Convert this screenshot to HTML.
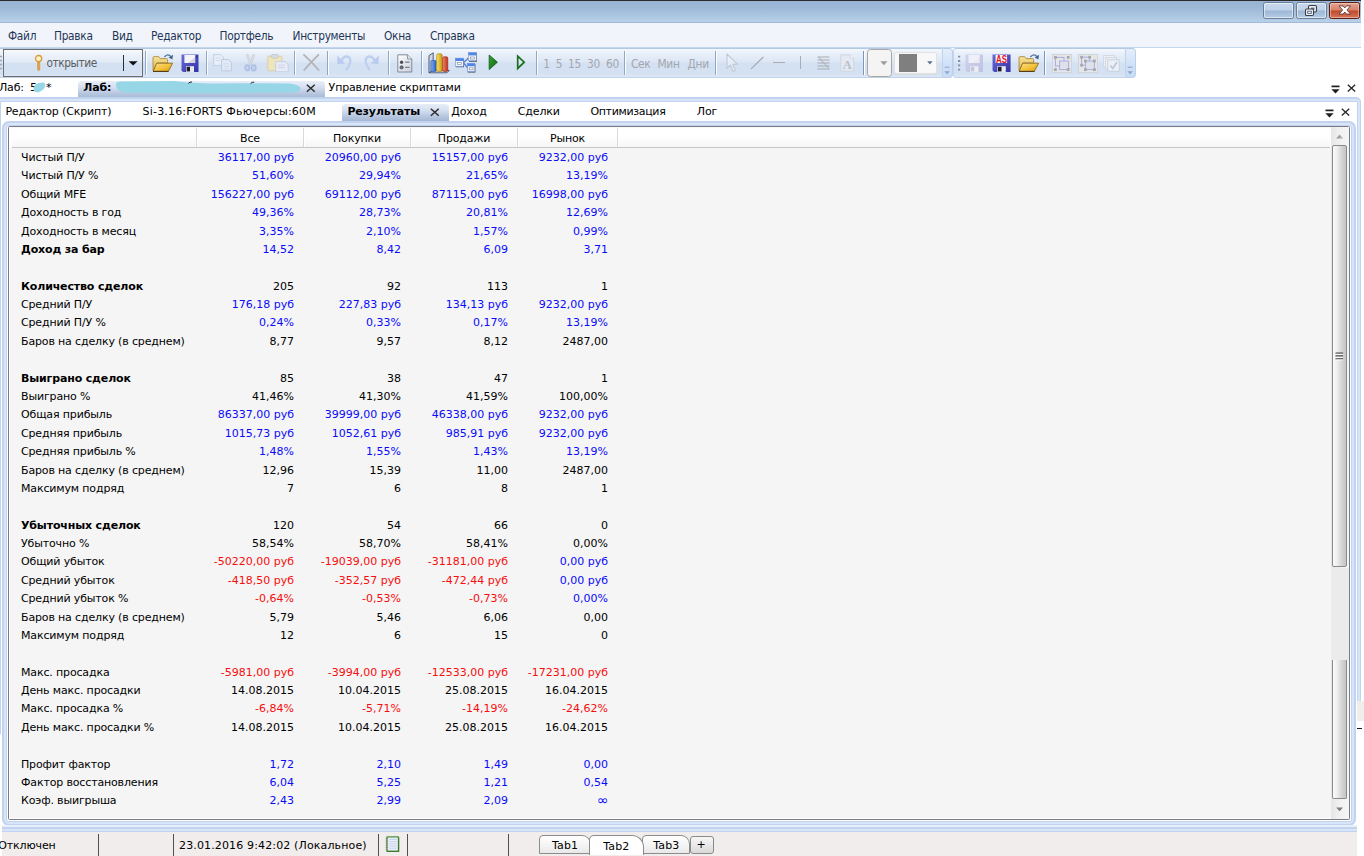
<!DOCTYPE html>
<html lang="ru"><head><meta charset="utf-8"><title>Результаты</title>
<style>
html,body{margin:0;padding:0}
body{width:1364px;height:856px;position:relative;overflow:hidden;background:#fff;font-family:"DejaVu Sans","Liberation Sans",sans-serif;font-size:11px;color:#000;line-height:13px}
div,span,svg{position:absolute;box-sizing:border-box}
.ui{font-family:"DejaVu Sans Condensed","Liberation Sans",sans-serif;font-size:11.8px;line-height:14px;white-space:pre;letter-spacing:-.3px}
.t{white-space:pre;letter-spacing:-0.15px}
/* title */
#title{left:0;top:0;width:1361px;height:23px;background:linear-gradient(#97b2d2 0,#9db8d7 30%,#aac4e0 65%,#b8d0e9 100%);border-top:1px solid #2a2a2a;border-bottom:1px solid #a3bad6}
.wb{top:2px;height:17px;border:1px solid #6d7f95;border-radius:2.5px;background:linear-gradient(#c6d8ec 0,#c0d3e9 48%,#9db7d4 52%,#b4cce6 100%);box-shadow:inset 0 0 0 1px rgba(255,255,255,.55)}
#wclose{background:linear-gradient(#e3a493 0,#d78069 48%,#c1482a 52%,#d4775b 100%);border-color:#5b1d16;box-shadow:inset 0 0 0 1px rgba(255,220,210,.5)}
/* menu */
#menu{left:0;top:23px;width:1361px;height:25px;background:#f1f5fb;border-bottom:1px solid #c3d6ec}
#menu span{top:6px;color:#1f3558}
/* toolbar */
.tb{top:48px;height:30px;background:linear-gradient(#f4f8fd 0,#e6eef9 20%,#dde7f5 46%,#d4e1f2 50%,#d4e1f2 88%,#dde8f6 100%);border-top:1px solid #b4c8df;border-bottom:1px solid #c2d3e9}
.ov{top:48px;height:30px;border-left:1px solid #c0d2ea;background:linear-gradient(#e4eefc,#cfe0f7 60%,#c8dcf6);border-top:1px solid #b4c8df;border-right:1px solid #bdd0ea;border-bottom:1px solid #bdd0ea;border-radius:0 4px 4px 0}
.sep{top:51px;width:2px;height:24px;border-left:1px solid #8fa6c4;border-right:1px solid #fbfdff}
.gt{top:56.9px;color:#a3a6ae}
/* tabs */
.seltab{background:linear-gradient(#e8eef8 0,#d5dff0 35%,#b6c6df 70%,#a2b5d3 100%);border-radius:4px 4px 0 0}
.bd{font-weight:bold}
/* table */
#tbl{left:0;top:0;width:1364px;height:856px}
.row{left:0;width:640px;height:13px}
.row span{top:0;white-space:pre}
.lab{left:21px;letter-spacing:-0.15px}
.v{text-align:right;width:110px}
.c0{left:184px}.c1{left:291px}.c2{left:398px}.c3{left:498px}
.b{color:#0a0afa}.r{color:#f60d0d}.inf{font-size:14px;top:-.6px !important;left:498.6px !important}.k{color:#000}
.hs{top:128px;width:2px;height:19px;border-left:1px solid #d9d9d9;border-right:1px solid #fff}
.hd{top:131.5px;width:107px;text-align:center;letter-spacing:-0.15px}
/* status */
#status{left:2px;top:832px;width:1355px;height:24px;background:#f1edec}
.ss{top:834.3px;width:1.2px;height:22px;background:#505050}
.btab{top:835px;height:19px;border:1px solid #8c8c8c;border-bottom:1px solid #8c8c8c;background:linear-gradient(#fff,#f3f3f3 60%,#e9e9e9);border-radius:4px 9px 0 0}
</style></head><body>
<div id="title"></div>
<div class="wb" style="left:1263.3px;width:30.5px"></div>
<div class="wb" style="left:1296px;width:30.7px"></div>
<svg style="left:1304px;top:4px" width="14" height="13" viewBox="0 0 14 13"><rect x="4.5" y="1.5" width="8" height="6.5" rx="1.2" fill="#e8eef6" stroke="#3a3f47" stroke-width="1.1"/><rect x="7" y="3.6" width="3.4" height="2" fill="#5b6c86"/><rect x="1.5" y="5" width="8" height="6.5" rx="1.2" fill="#f4f7fb" stroke="#3a3f47" stroke-width="1.1"/><rect x="3.7" y="7.2" width="3.6" height="2.2" fill="#fff" stroke="#4a5a78" stroke-width=".9"/></svg>
<div class="wb" id="wclose" style="left:1329px;width:31px"></div>
<svg style="left:1337.6px;top:5.2px" width="13.6" height="10" viewBox="0 0 13 11" preserveAspectRatio="none"><path d="M1 1 L4.8 1 L6.5 3.2 L8.2 1 L12 1 L8.6 5.5 L12 10 L8.2 10 L6.5 7.8 L4.8 10 L1 10 L4.4 5.5 Z" fill="#fff" stroke="#5a3a36" stroke-width=".9" stroke-linejoin="round"/></svg>
<div id="menu" class="ui"><span style="left:8px">Файл</span><span style="left:54px">Правка</span><span style="left:112px">Вид</span><span style="left:151px">Редактор</span><span style="left:219.5px">Портфель</span><span style="left:292.5px">Инструменты</span><span style="left:384px">Окна</span><span style="left:430px">Справка</span></div>
<div class="tb" style="left:0;width:942px"></div><div class="ov" style="left:942px;width:10.5px"></div>
<div class="tb" style="left:953.4px;width:171.8px;border-radius:3px 0 0 3px;border-left:1px solid #c5d6ec"></div><div class="ov" style="left:1125.2px;width:10.8px"></div>
<svg style="left:0;top:54px" width="3" height="18"><path d="M0 2.5h2M0 6.5h2M0 10.5h2M0 14.5h2" stroke="#9aa9c2" stroke-width="1.4"/></svg>
<div style="left:3px;top:49px;width:140px;height:28px;border:1px solid #6e6e6e;background:linear-gradient(rgba(255,255,255,.35),rgba(255,255,255,.12) 48%,rgba(255,255,255,0) 52%)"></div>
<svg style="left:33px;top:54px" width="11" height="18" viewBox="0 0 11 18"><rect x="4.6" y="6.5" width="2.2" height="10" rx="1" fill="#e3a53a" stroke="#c8862a" stroke-width=".5"/><circle cx="5.6" cy="4.6" r="3.1" fill="#fdf2cc" stroke="#d99a35" stroke-width="1.3"/></svg>
<span class="ui" style="left:46.5px;top:56.3px;color:#5e5e5e;letter-spacing:-.45px">открытие</span>
<div style="left:123px;top:55px;width:1px;height:16px;background:#2e2e2e"></div>
<svg style="left:128px;top:61px" width="10" height="5"><path d="M.6 .3 L9.6 .3 L5.1 4.6 Z" fill="#111"/></svg>
<div class="sep" style="left:145px"></div>
<svg style="left:151.5px;top:52.5px" width="22" height="19.5" viewBox="0 0 22 19.5"><defs><linearGradient id="fg1" x1="0" y1="0" x2="0" y2="1"><stop offset="0" stop-color="#f7e49a"/><stop offset="1" stop-color="#e3b546"/></linearGradient><linearGradient id="fg2" x1="0" y1="0" x2="1" y2="1"><stop offset="0" stop-color="#fbe08a"/><stop offset=".55" stop-color="#f3c23c"/><stop offset="1" stop-color="#e29a14"/></linearGradient></defs>
<path d="M1 17.6 L1 4.8 Q1 3.6 2.2 3.6 L6.6 3.6 L8.2 5.6 L14.6 5.6 Q15.6 5.6 15.6 6.6 L15.6 10 L5 10 L1.6 17.6 Z" fill="url(#fg1)" stroke="#a88a4a" stroke-width=".9"/>
<path d="M1.2 18.2 L4.6 10.2 L20.6 10.2 L16.4 18.2 Z" fill="url(#fg2)" stroke="#8f6a1c" stroke-width=".9"/>
<path d="M1 18.8 L16.6 18.8" stroke="#3a2a08" stroke-width="1.2"/>
<path d="M12.4 4 Q15.6 -.2 19.2 3.6" fill="none" stroke="#56759c" stroke-width="1.25"/><path d="M21 1.8 L20.4 6.6 L16.6 4.4 Z" fill="#3f6290"/></svg>
<svg style="left:181px;top:53.5px" width="18" height="18.5" viewBox="0 0 18 18.5"><defs><linearGradient id="fl6a6ad8" x1="0" y1="0" x2="1" y2="1"><stop offset="0" stop-color="#6a6ad8"/><stop offset="1" stop-color="#3433a6"/></linearGradient></defs>
<path d="M.5 .5 L17.5 .5 L17.5 18 L2 18 L.5 16.5 Z" fill="url(#fl6a6ad8)"/>
<rect x="3.4" y="1" width="10.8" height="8" fill="#f4f4fa"/><path d="M14.2 3 L14.2 9 L7 9 Z" fill="#9a9ab0" opacity=".35"/>
<rect x="5" y="12.2" width="8" height="5.8" fill="#e8e8f0"/><rect x="5.6" y="12.8" width="3.4" height="4.6" fill="#1e1e2a"/><rect x="15" y="1.6" width="1.4" height="2" fill="#2b2b8a"/></svg>
<div class="sep" style="left:206px"></div>
<svg style="left:213px;top:54px" width="20" height="18" viewBox="0 0 20 18"><path d="M.6 .6 L7.6 .6 L10.4 3.4 L10.4 11.4 L.6 11.4 Z" fill="#e9eff8" stroke="#c3cfe3"/><path d="M8.6 5.6 L15.6 5.6 L18.4 8.4 L18.4 16.9 L8.6 16.9 Z" fill="#e3eaf6" stroke="#bccae1"/><path d="M2.5 4h5M2.5 6.5h5M10.5 10h6M10.5 12.5h6M10.5 15h6" stroke="#cfd9ea" stroke-width="1"/></svg>
<svg style="left:243.5px;top:53.5px" width="13" height="18" viewBox="0 0 13 18"><path d="M2.2 .6 L4.4 .6 L7.2 10.8 L5.6 11.2 Z M10.8 .6 L8.6 .6 L5.8 10.8 L7.4 11.2 Z" fill="#d9dce4" stroke="#c6cad5" stroke-width=".5"/><ellipse cx="3.3" cy="13.9" rx="2.1" ry="2.7" fill="#c9d5f0" stroke="#aebfe6" stroke-width="1.7"/><ellipse cx="9.7" cy="13.9" rx="2.1" ry="2.7" fill="#c9d5f0" stroke="#aebfe6" stroke-width="1.7"/></svg>
<svg style="left:267px;top:53.5px" width="22" height="18.5" viewBox="0 0 22 18.5"><rect x=".8" y="2.2" width="14" height="14.6" rx="1" fill="#efe5bb" stroke="#d9cfa8"/><rect x="4.6" y=".6" width="6.4" height="3.4" rx=".8" fill="#dcdde3" stroke="#c3c6d0"/><path d="M8.6 7.6 L18 7.6 L21.2 10.6 L21.2 17.8 L8.6 17.8 Z" fill="#e6ebf5" stroke="#c6d0e3"/><path d="M11 11.2h7M11 13.6h7" stroke="#cdd6e6"/></svg>
<div class="sep" style="left:293.8px"></div>
<svg style="left:303px;top:53.5px" width="17" height="17" viewBox="0 0 17 17"><path d="M1 .8 Q8 7 15.6 16 M15.4 .8 Q8 8 1.2 16" stroke="#b3b3b3" stroke-width="1.8" fill="none" stroke-linecap="round"/></svg>
<div class="sep" style="left:327px"></div>
<svg style="left:335.5px;top:54px" width="17" height="17" viewBox="0 0 17 17"><path d="M5.4 6.4 Q8.6 .8 13 3.2 Q16.6 7.4 10.6 15.4" fill="none" stroke="#bfcff0" stroke-width="2.4" stroke-linecap="round"/><path d="M1.2 1.4 L1.6 10 L9.2 9.6 Z" fill="#b9cbee"/></svg>
<svg style="left:362.5px;top:54px" width="17" height="17" viewBox="0 0 17 17"><path d="M11.6 6.4 Q8.4 .8 4 3.2 Q.4 7.4 6.4 15.4" fill="none" stroke="#bfcff0" stroke-width="2.4" stroke-linecap="round"/><path d="M15.8 1.4 L15.4 10 L7.8 9.6 Z" fill="#b9cbee"/></svg>
<div class="sep" style="left:388px"></div>
<svg style="left:397px;top:53.5px" width="16" height="19" viewBox="0 0 16 19"><defs><linearGradient id="dg" x1="0" y1="0" x2="1" y2="1"><stop offset="0" stop-color="#ffffff"/><stop offset="1" stop-color="#c9d0dc"/></linearGradient></defs><path d="M.8 .8 L10.6 .8 L14.8 5 L14.8 18 L.8 18 Z" fill="url(#dg)" stroke="#7f8a9c" stroke-width="1"/><path d="M10.6 .8 L10.6 5 L14.8 5" fill="#e9edf3" stroke="#7f8a9c" stroke-width=".9"/><circle cx="4.6" cy="8.2" r="1.7" fill="#4a4f58"/><circle cx="4.6" cy="13.4" r="1.7" fill="#6a7078" stroke="#3e434b" stroke-width=".6"/><path d="M8 8.2h4.6M8 13.4h4.6" stroke="#7b828e" stroke-width="1.2"/></svg>
<div class="sep" style="left:420.5px"></div>
<svg style="left:427.5px;top:52px" width="22" height="22" viewBox="0 0 22 22"><defs><linearGradient id="cb" x1="0" y1="0" x2="1" y2="0"><stop offset="0" stop-color="#7fb0f0"/><stop offset="1" stop-color="#2a5fc4"/></linearGradient><linearGradient id="cy" x1="0" y1="0" x2="1" y2="0"><stop offset="0" stop-color="#f6e36a"/><stop offset="1" stop-color="#c99a14"/></linearGradient><linearGradient id="cr" x1="0" y1="0" x2="1" y2="0"><stop offset="0" stop-color="#f08a6a"/><stop offset="1" stop-color="#c0301c"/></linearGradient></defs><path d="M1 3.6 L5.2 .8 L5.2 18.6 L1 20.8 Z" fill="#d3d9e4" stroke="#3d4c70" stroke-width=".9"/><path d="M1 20.8 L5.2 18.4 L21.4 18.4 L19 20.8 Z" fill="#bfc6d3" stroke="#3d4c70" stroke-width=".8"/><rect x="2.8" y="8.4" width="5.4" height="11" rx="1.2" fill="url(#cb)" stroke="#2552a8" stroke-width=".6"/><rect x="8.6" y="1.8" width="5.6" height="17.6" rx="1.4" fill="url(#cy)" stroke="#a88212" stroke-width=".6"/><rect x="14.6" y="4.8" width="5.2" height="14.6" rx="1.3" fill="url(#cr)" stroke="#9c2814" stroke-width=".6"/></svg>
<svg style="left:455px;top:52px" width="22" height="21" viewBox="0 0 22 21"><path d="M8.6 10.4 L13.4 6 M8.6 11 L13 16.4" stroke="#4f7fd6" stroke-width="1.3" fill="none"/><rect x="1" y="6.8" width="8" height="8.4" fill="#4d586c"/><rect x=".5" y="6.2" width="7.8" height="8.2" fill="#eef3fc" stroke="#6d8fd6" stroke-width=".6"/><rect x=".5" y="6.2" width="7.8" height="2.8" fill="#4f86e6"/><rect x="2.4" y="10.6" width="4" height="2" fill="#fff" stroke="#7d8796" stroke-width=".6"/><rect x="14" y="1.2" width="8" height="8.6" fill="#4d586c"/><rect x="13.6" y=".6" width="7.8" height="8.2" fill="#eef3fc" stroke="#6d8fd6" stroke-width=".6"/><rect x="13.6" y=".6" width="7.8" height="2.8" fill="#4f86e6"/><rect x="15.6" y="5" width="4" height="2" fill="#fff" stroke="#7d8796" stroke-width=".6"/><rect x="12.8" y="12" width="7.6" height="8.6" fill="#4d586c"/><rect x="12.4" y="11.4" width="7.4" height="8.2" fill="#eef3fc" stroke="#6d8fd6" stroke-width=".6"/><rect x="12.4" y="11.4" width="7.4" height="2.8" fill="#4f86e6"/><rect x="14.2" y="15.8" width="3.8" height="2" fill="#fff" stroke="#7d8796" stroke-width=".6"/></svg>
<svg style="left:488px;top:54px" width="11" height="17" viewBox="0 0 11 17"><defs><linearGradient id="pg" x1="0" y1="0" x2="1" y2="1"><stop offset="0" stop-color="#3aa23a"/><stop offset="1" stop-color="#0f650f"/></linearGradient></defs><path d="M1.2 1 L9.4 8.2 L1.2 15.6 Z" fill="url(#pg)" stroke="#14661a" stroke-width=".9"/></svg>
<svg style="left:515.5px;top:54px" width="11" height="17" viewBox="0 0 11 17"><path d="M1.7 2.2 L8.2 8.2 L1.7 14.4 Z" fill="none" stroke="#1c701c" stroke-width="1.7" stroke-linejoin="miter"/></svg>
<div class="sep" style="left:536px"></div>
<span class="ui gt" style="left:543.3px">1</span><span class="ui gt" style="left:555.8px">5</span><span class="ui gt" style="left:568px">15</span><span class="ui gt" style="left:587px">30</span><span class="ui gt" style="left:606px">60</span>
<div class="sep" style="left:624.3px"></div>
<span class="ui gt" style="left:631px">Сек</span><span class="ui gt" style="left:657.5px">Мин</span><span class="ui gt" style="left:687.5px">Дни</span>
<div class="sep" style="left:715px"></div>
<svg style="left:725.5px;top:52.5px" width="13" height="20" viewBox="0 0 13 20"><path d="M1 1 L1 15.4 L4.4 12.2 L7 18.6 L9.4 17.6 L6.8 11.4 L11.4 11.2 Z" fill="rgba(255,255,255,.3)" stroke="#c0c8d6" stroke-width="1.1" stroke-linejoin="round"/></svg>
<svg style="left:750px;top:56px" width="15" height="14"><path d="M1 12.8 L13.4 1" stroke="#a4a7ad" stroke-width="1.1"/></svg>
<div style="left:773px;top:62px;width:12px;height:1px;background:#a9acb2"></div>
<div style="left:800px;top:56px;width:1px;height:13px;background:#a9acb2"></div>
<svg style="left:816.5px;top:55.5px" width="13" height="14"><path d="M.5 1h12M.5 4h12M.5 7h12M.5 10h12M.5 13h12" stroke="#a9acb1" stroke-width="1"/><path d="M1.5 1 L12 12.6" stroke="#a9acb1" stroke-width="1"/></svg>
<svg style="left:840px;top:54px" width="15" height="18" viewBox="0 0 15 18"><path d="M.8 .8 L10.2 .8 L13.8 4.4 L13.8 17.2 L.8 17.2 Z" fill="#e4e9f2" stroke="#cfd6e3"/><path d="M10.2 .8 L10.2 4.4 L13.8 4.4" fill="#f3f5f9" stroke="#cfd6e3" stroke-width=".8"/><text x="7.2" y="14.6" font-family="Liberation Serif,serif" font-size="12.5" font-weight="bold" text-anchor="middle" fill="#b9bec8">A</text></svg>
<div class="sep" style="left:863px;border-left-color:#7f96b8"></div>
<div style="left:867.3px;top:49.2px;width:24.4px;height:27.6px;border:1px solid #a6a6a6;border-radius:3.5px;background:#f4f4f4"></div>
<svg style="left:879.5px;top:61px" width="8" height="5"><path d="M.3 .3 L7.5 .3 L3.9 4.3 Z" fill="#9d9d9d"/></svg>
<div style="left:894.2px;top:52.2px;width:42.7px;height:21.7px;border:1px solid #e1e1e1;border-radius:2.5px;background:#f8f8f8;box-shadow:0 1px 0 #d8dce4"></div>
<div style="left:899px;top:54px;width:18px;height:18px;background:#7f7f7f"></div>
<svg style="left:926.5px;top:61px" width="6" height="4"><path d="M.2 .2 L5.6 .2 L2.9 3.4 Z" fill="#5a7096"/></svg>
<svg style="left:943.5px;top:65px" width="7" height="10"><path d="M.6 2.2h5" stroke="#8ea3cb" stroke-width="1"/><path d="M.4 6.2 L5.8 6.2 L3.1 9.2 Z" fill="#8ea3cb"/></svg>
<svg style="left:1127.2px;top:65px" width="7" height="10"><path d="M.6 2.2h5" stroke="#8ea3cb" stroke-width="1"/><path d="M.4 6.2 L5.8 6.2 L3.1 9.2 Z" fill="#8ea3cb"/></svg>
<svg style="left:958px;top:55px" width="3" height="16"><path d="M0 1.6h2.2M0 6h2.2M0 10.4h2.2M0 14.6h2.2" stroke="#7f90b2" stroke-width="1.8"/></svg>
<svg style="left:964.6px;top:53.5px" width="18.6" height="18.5" viewBox="0 0 18 18.5" preserveAspectRatio="none"><defs><linearGradient id="fld0d2ee" x1="0" y1="0" x2="1" y2="1"><stop offset="0" stop-color="#d0d2ee"/><stop offset="1" stop-color="#bfc2e2"/></linearGradient></defs>
<path d="M.5 .5 L17.5 .5 L17.5 18 L2 18 L.5 16.5 Z" fill="url(#fld0d2ee)"/>
<rect x="3.4" y="1" width="10.8" height="8" fill="#f0f1f8"/><path d="M14.2 3 L14.2 9 L7 9 Z" fill="#9a9ab0" opacity=".08"/>
<rect x="5" y="12.2" width="8" height="5.8" fill="#eceef4"/><rect x="5.6" y="12.8" width="3.4" height="4.6" fill="#c6c8d8"/></svg>
<svg style="left:991.8px;top:53.5px" width="19.1" height="18.5" viewBox="0 0 18 18.5" preserveAspectRatio="none"><defs><linearGradient id="fl6b6bd9" x1="0" y1="0" x2="1" y2="1"><stop offset="0" stop-color="#6b6bd9"/><stop offset="1" stop-color="#3332a5"/></linearGradient></defs>
<path d="M.5 .5 L17.5 .5 L17.5 18 L2 18 L.5 16.5 Z" fill="url(#fl6b6bd9)"/>
<rect x="3.4" y="1" width="10.8" height="8" fill="#fbfbff"/><path d="M14.2 3 L14.2 9 L7 9 Z" fill="#9a9ab0" opacity="0"/>
<rect x="5" y="12.2" width="8" height="5.8" fill="#e8e8f0"/><rect x="5.6" y="12.8" width="3.4" height="4.6" fill="#1e1e2a"/><text x="8.9" y="8.5" font-family="Liberation Sans,sans-serif" font-size="10" font-weight="bold" text-anchor="middle" fill="#e0141c" textLength="10.4" lengthAdjust="spacingAndGlyphs">AS</text></svg>
<svg style="left:1017.5px;top:52.5px" width="22" height="19.5" viewBox="0 0 22 19.5"><defs><linearGradient id="fh1" x1="0" y1="0" x2="0" y2="1"><stop offset="0" stop-color="#f7e49a"/><stop offset="1" stop-color="#e3b546"/></linearGradient><linearGradient id="fh2" x1="0" y1="0" x2="1" y2="1"><stop offset="0" stop-color="#fbe08a"/><stop offset=".55" stop-color="#f3c23c"/><stop offset="1" stop-color="#e29a14"/></linearGradient></defs>
<path d="M1 17.6 L1 4.8 Q1 3.6 2.2 3.6 L6.6 3.6 L8.2 5.6 L14.6 5.6 Q15.6 5.6 15.6 6.6 L15.6 10 L5 10 L1.6 17.6 Z" fill="url(#fh1)" stroke="#a88a4a" stroke-width=".9"/>
<path d="M1.2 18.2 L4.6 10.2 L20.6 10.2 L16.4 18.2 Z" fill="url(#fh2)" stroke="#8f6a1c" stroke-width=".9"/>
<path d="M1 18.8 L16.6 18.8" stroke="#3a2a08" stroke-width="1.2"/>
<path d="M12.4 4 Q15.6 -.2 19.2 3.6" fill="none" stroke="#56759c" stroke-width="1.25"/><path d="M21 1.8 L20.4 6.6 L16.6 4.4 Z" fill="#3f6290"/></svg>
<div class="sep" style="left:1044px;border-left-color:#7f96b8"></div>
<svg style="left:1051.5px;top:53.5px" width="20" height="19" viewBox="0 0 20 19"><rect x=".5" y=".5" width="19" height="18" fill="#e5e6e8" stroke="#d2d4d8"/><rect x="3.4" y="3.4" width="8.6" height="8.6" fill="none" stroke="#a9abe6" stroke-width="1"/><rect x="7.6" y="7" width="9" height="8.6" fill="#dfe1e8" stroke="#a9abe6" stroke-width="1"/><g fill="#a6a8ab"><rect x="2" y="2" width="2.8" height="2.8"/><rect x="14.8" y="2" width="2.8" height="2.8"/><rect x="2" y="14.2" width="2.8" height="2.8"/><rect x="14.8" y="14.2" width="2.8" height="2.8"/></g></svg>
<svg style="left:1077.5px;top:53.5px" width="20" height="19" viewBox="0 0 20 19"><rect x=".5" y=".5" width="19" height="18" fill="#e5e6e8" stroke="#d2d4d8"/><rect x="3.6" y="3.2" width="8" height="8" fill="none" stroke="#a9abe6" stroke-width="1"/><rect x="7.4" y="7" width="9" height="8.6" fill="#dfe1e8" stroke="#a9abe6" stroke-width="1"/><g fill="#a6a8ab"><rect x="2.2" y="1.8" width="2.8" height="2.8"/><rect x="10.2" y="1.8" width="2.8" height="2.8"/><rect x="2.2" y="9.8" width="2.8" height="2.8"/><rect x="6" y="5.6" width="2.8" height="2.8"/><rect x="15" y="5.6" width="2.8" height="2.8"/><rect x="6" y="14.2" width="2.8" height="2.8"/><rect x="15" y="14.2" width="2.8" height="2.8"/></g></svg>
<svg style="left:1102.5px;top:54.5px" width="17" height="17" viewBox="0 0 17 17"><rect x=".6" y=".6" width="11" height="11" fill="#f1f3f8" stroke="#d3d8e4"/><rect x="2.6" y="2.6" width="11" height="11" fill="#eef1f7" stroke="#cfd5e2"/><rect x="4.8" y="4.8" width="11.4" height="11.4" fill="#eceff6" stroke="#c9d0df"/><path d="M7.4 10.6 L9.8 13.4 L14 7" fill="none" stroke="#b9c4da" stroke-width="1.5"/></svg>
<!-- outer document tabs -->
<span class="t" style="left:-1px;top:81px">Лаб:</span><span class="t" style="left:30px;top:81px">5</span><span class="t" style="left:46px;top:81px">*</span>
<svg style="left:32px;top:81.4px" width="15" height="13"><path d="M3.4 3.6 Q6.6 1.2 11.4 1.4 Q14.2 2.6 13 6 Q10.6 10.4 5.4 11.4 Q1.6 11.2 1.6 8 Q1.8 5.2 3.4 3.6 Z" fill="#96d6e7"/></svg>
<div class="seltab" style="left:78px;top:81px;width:247px;height:18px"></div>
<span class="t bd" style="left:83.2px;top:81px">Лаб:</span>
<svg style="left:113px;top:79px" width="190" height="17" viewBox="0 0 190 17"><path d="M3 6 Q2 2.6 8 2.4 L60 2 Q66 2.4 74 3.4 L96 4.4 Q120 4 150 4.2 L176 4.6 Q187 6 187.6 9.4 Q187 13.4 178 13.6 L120 14 Q96 14.6 76 14.2 L12 13.6 Q3.4 12.6 3 6 Z" fill="#96d6e7"/><path d="M75.4 4.4 q1.4 -1.8 3.6 -1.4 M137.6 4.6 q1.4 -1.8 3.6 -1.4" stroke="#222" stroke-width="1" fill="none"/></svg>
<svg style="left:306px;top:84.4px" width="9.6" height="9.2" viewBox="0 0 9 9" preserveAspectRatio="none"><path d="M.8 .8 L8.2 7.6 M8.2 .8 L.8 7.6" stroke="#2b2b2b" stroke-width="1.35" fill="none"/></svg>
<span class="t" style="left:328.6px;top:81px">Управление скриптами</span>
<svg style="left:1330.6px;top:85px" width="9" height="9"><path d="M.5 1.4h8" stroke="#1e1e1e" stroke-width="1.7"/><path d="M.4 4.2 L8.6 4.2 L4.5 8.5 Z" fill="#1e1e1e"/></svg>
<svg style="left:1347px;top:84px" width="9" height="9"><path d="M.8 .8 L8.2 7.6 M8.2 .8 L.8 7.6" stroke="#2b2b2b" stroke-width="1.35" fill="none"/></svg>
<!-- outer panel frame -->
<div style="left:-4px;top:97px;width:1365.3px;height:735px;border:5px solid #c2d3ef;border-right-width:4.6px;border-radius:5px 5px 0 0;background:#fff"></div>
<div style="left:-2.5px;top:98.5px;width:1362.4px;height:732px;border:2px solid #d8e4f8;border-radius:3.5px 3.5px 0 0"></div>
<!-- inner tabs -->
<span class="t" style="left:5.4px;top:105.1px">Редактор (Скрипт)</span>
<span class="t" style="left:142.6px;top:105.1px;letter-spacing:.18px">Si-3.16:FORTS Фьючерсы:60M</span>
<div class="seltab" style="left:342px;top:104px;width:107px;height:18px"></div>
<span class="t bd" style="left:347.4px;top:105.1px">Результаты</span>
<svg style="left:429.6px;top:108.2px" width="9.6" height="9.2" viewBox="0 0 9 9" preserveAspectRatio="none"><path d="M.8 .8 L8.2 7.6 M8.2 .8 L.8 7.6" stroke="#2b2b2b" stroke-width="1.35" fill="none"/></svg>
<span class="t" style="left:451.3px;top:105.1px">Доход</span>
<span class="t" style="left:517.8px;top:105.1px">Сделки</span>
<span class="t" style="left:590.4px;top:105.1px;letter-spacing:-.33px">Оптимизация</span>
<span class="t" style="left:696.8px;top:105.1px">Лог</span>
<svg style="left:1324.7px;top:108.5px" width="9" height="9"><path d="M.5 1.4h8" stroke="#1e1e1e" stroke-width="1.7"/><path d="M.4 4.2 L8.6 4.2 L4.5 8.5 Z" fill="#1e1e1e"/></svg>
<svg style="left:1341.2px;top:108px" width="9" height="9"><path d="M.8 .8 L8.2 7.6 M8.2 .8 L.8 7.6" stroke="#2b2b2b" stroke-width="1.35" fill="none"/></svg>
<!-- inner panel frame -->
<div style="left:2px;top:121px;width:1353.8px;height:704.6px;border:5px solid #c2d3ef;border-radius:7px;background:#fff"></div>
<div style="left:3.5px;top:122.5px;width:1350.8px;height:701.6px;border:2px solid #d8e4f8;border-radius:5.5px"></div>
<div style="left:2px;top:825.4px;width:1355px;height:1.6px;background:#e9eff9"></div>
<div style="left:8px;top:126px;width:1342px;height:694px;background:#fff;border:1px solid #797c84;border-radius:1.5px"></div>
<div style="left:10px;top:148px;width:1339px;height:670px;background:#f5f5f5"></div>
<div style="left:12px;top:127px;width:1318px;height:21px;background:linear-gradient(#f4f4f4 0,#fff 1.5px,#fff 45%,#f6f6f6 100%);border-bottom:1px solid #c6c6c6"></div>
<div class="hs" style="left:196px"></div><div class="hs" style="left:303px"></div><div class="hs" style="left:410px"></div><div class="hs" style="left:517px"></div><div class="hs" style="left:617px"></div>
<span class="hd" style="left:196.5px">Все</span><span class="hd" style="left:303.5px">Покупки</span><span class="hd" style="left:410.5px">Продажи</span><span class="hd" style="left:517.5px;width:100px">Рынок</span>
<div id="tbl">
<div class="row" style="top:151.10px"><span class="lab">Чистый П/У</span><span class="v c0 b">36117,00 руб</span><span class="v c1 b">20960,00 руб</span><span class="v c2 b">15157,00 руб</span><span class="v c3 b">9232,00 руб</span></div>
<div class="row" style="top:169.48px"><span class="lab">Чистый П/У %</span><span class="v c0 b">51,60%</span><span class="v c1 b">29,94%</span><span class="v c2 b">21,65%</span><span class="v c3 b">13,19%</span></div>
<div class="row" style="top:187.85px"><span class="lab">Общий MFE</span><span class="v c0 b">156227,00 руб</span><span class="v c1 b">69112,00 руб</span><span class="v c2 b">87115,00 руб</span><span class="v c3 b">16998,00 руб</span></div>
<div class="row" style="top:206.23px"><span class="lab">Доходность в год</span><span class="v c0 b">49,36%</span><span class="v c1 b">28,73%</span><span class="v c2 b">20,81%</span><span class="v c3 b">12,69%</span></div>
<div class="row" style="top:224.61px"><span class="lab">Доходность в месяц</span><span class="v c0 b">3,35%</span><span class="v c1 b">2,10%</span><span class="v c2 b">1,57%</span><span class="v c3 b">0,99%</span></div>
<div class="row" style="top:242.99px"><span class="lab bd">Доход за бар</span><span class="v c0 b">14,52</span><span class="v c1 b">8,42</span><span class="v c2 b">6,09</span><span class="v c3 b">3,71</span></div>
<div class="row" style="top:279.74px"><span class="lab bd">Количество сделок</span><span class="v c0 k">205</span><span class="v c1 k">92</span><span class="v c2 k">113</span><span class="v c3 k">1</span></div>
<div class="row" style="top:298.12px"><span class="lab">Средний П/У</span><span class="v c0 b">176,18 руб</span><span class="v c1 b">227,83 руб</span><span class="v c2 b">134,13 руб</span><span class="v c3 b">9232,00 руб</span></div>
<div class="row" style="top:316.49px"><span class="lab">Средний П/У %</span><span class="v c0 b">0,24%</span><span class="v c1 b">0,33%</span><span class="v c2 b">0,17%</span><span class="v c3 b">13,19%</span></div>
<div class="row" style="top:334.87px"><span class="lab">Баров на сделку (в среднем)</span><span class="v c0 k">8,77</span><span class="v c1 k">9,57</span><span class="v c2 k">8,12</span><span class="v c3 k">2487,00</span></div>
<div class="row" style="top:371.62px"><span class="lab bd">Выиграно сделок</span><span class="v c0 k">85</span><span class="v c1 k">38</span><span class="v c2 k">47</span><span class="v c3 k">1</span></div>
<div class="row" style="top:390.00px"><span class="lab">Выиграно %</span><span class="v c0 k">41,46%</span><span class="v c1 k">41,30%</span><span class="v c2 k">41,59%</span><span class="v c3 k">100,00%</span></div>
<div class="row" style="top:408.38px"><span class="lab">Общая прибыль</span><span class="v c0 b">86337,00 руб</span><span class="v c1 b">39999,00 руб</span><span class="v c2 b">46338,00 руб</span><span class="v c3 b">9232,00 руб</span></div>
<div class="row" style="top:426.75px"><span class="lab">Средняя прибыль</span><span class="v c0 b">1015,73 руб</span><span class="v c1 b">1052,61 руб</span><span class="v c2 b">985,91 руб</span><span class="v c3 b">9232,00 руб</span></div>
<div class="row" style="top:445.13px"><span class="lab">Средняя прибыль %</span><span class="v c0 b">1,48%</span><span class="v c1 b">1,55%</span><span class="v c2 b">1,43%</span><span class="v c3 b">13,19%</span></div>
<div class="row" style="top:463.51px"><span class="lab">Баров на сделку (в среднем)</span><span class="v c0 k">12,96</span><span class="v c1 k">15,39</span><span class="v c2 k">11,00</span><span class="v c3 k">2487,00</span></div>
<div class="row" style="top:481.89px"><span class="lab">Максимум подряд</span><span class="v c0 k">7</span><span class="v c1 k">6</span><span class="v c2 k">8</span><span class="v c3 k">1</span></div>
<div class="row" style="top:518.64px"><span class="lab bd">Убыточных сделок</span><span class="v c0 k">120</span><span class="v c1 k">54</span><span class="v c2 k">66</span><span class="v c3 k">0</span></div>
<div class="row" style="top:537.02px"><span class="lab">Убыточно %</span><span class="v c0 k">58,54%</span><span class="v c1 k">58,70%</span><span class="v c2 k">58,41%</span><span class="v c3 k">0,00%</span></div>
<div class="row" style="top:555.39px"><span class="lab">Общий убыток</span><span class="v c0 r">-50220,00 руб</span><span class="v c1 r">-19039,00 руб</span><span class="v c2 r">-31181,00 руб</span><span class="v c3 b">0,00 руб</span></div>
<div class="row" style="top:573.77px"><span class="lab">Средний убыток</span><span class="v c0 r">-418,50 руб</span><span class="v c1 r">-352,57 руб</span><span class="v c2 r">-472,44 руб</span><span class="v c3 b">0,00 руб</span></div>
<div class="row" style="top:592.15px"><span class="lab">Средний убыток %</span><span class="v c0 r">-0,64%</span><span class="v c1 r">-0,53%</span><span class="v c2 r">-0,73%</span><span class="v c3 b">0,00%</span></div>
<div class="row" style="top:610.52px"><span class="lab">Баров на сделку (в среднем)</span><span class="v c0 k">5,79</span><span class="v c1 k">5,46</span><span class="v c2 k">6,06</span><span class="v c3 k">0,00</span></div>
<div class="row" style="top:628.90px"><span class="lab">Максимум подряд</span><span class="v c0 k">12</span><span class="v c1 k">6</span><span class="v c2 k">15</span><span class="v c3 k">0</span></div>
<div class="row" style="top:665.66px"><span class="lab">Макс. просадка</span><span class="v c0 r">-5981,00 руб</span><span class="v c1 r">-3994,00 руб</span><span class="v c2 r">-12533,00 руб</span><span class="v c3 r">-17231,00 руб</span></div>
<div class="row" style="top:684.03px"><span class="lab">День макс. просадки</span><span class="v c0 k">14.08.2015</span><span class="v c1 k">10.04.2015</span><span class="v c2 k">25.08.2015</span><span class="v c3 k">16.04.2015</span></div>
<div class="row" style="top:702.41px"><span class="lab">Макс. просадка %</span><span class="v c0 r">-6,84%</span><span class="v c1 r">-5,71%</span><span class="v c2 r">-14,19%</span><span class="v c3 r">-24,62%</span></div>
<div class="row" style="top:720.79px"><span class="lab">День макс. просадки %</span><span class="v c0 k">14.08.2015</span><span class="v c1 k">10.04.2015</span><span class="v c2 k">25.08.2015</span><span class="v c3 k">16.04.2015</span></div>
<div class="row" style="top:757.54px"><span class="lab">Профит фактор</span><span class="v c0 b">1,72</span><span class="v c1 b">2,10</span><span class="v c2 b">1,49</span><span class="v c3 b">0,00</span></div>
<div class="row" style="top:775.92px"><span class="lab">Фактор восстановления</span><span class="v c0 b">6,04</span><span class="v c1 b">5,25</span><span class="v c2 b">1,21</span><span class="v c3 b">0,54</span></div>
<div class="row" style="top:794.29px"><span class="lab">Коэф. выигрыша</span><span class="v c0 b">2,43</span><span class="v c1 b">2,99</span><span class="v c2 b">2,09</span><span class="v c3 b inf">∞</span></div>
</div>
<!-- scrollbar -->
<div style="left:1331px;top:127px;width:18px;height:692px;background:linear-gradient(90deg,#e6e6e6,#f1f1f1 50%,#f6f6f6)"></div>
<div style="left:1331px;top:567.5px;width:18px;height:92.3px;background:#ebebeb"></div>
<svg style="left:1335.6px;top:133.6px" width="8" height="5"><defs><linearGradient id="ua" x1="0" y1="0" x2="1" y2="0"><stop offset="0" stop-color="#8a8a8a"/><stop offset="1" stop-color="#bdbdbd"/></linearGradient></defs><path d="M.2 4.6 L3.6 .5 L7.2 4.6 Z" fill="url(#ua)"/></svg>
<div style="left:1332.2px;top:145.3px;width:14.8px;height:422.2px;border:1px solid #8a8a8a;border-radius:2px;background:linear-gradient(90deg,#fbfbfb 0,#efefef 30%,#d6d6d6 65%,#c4c4c4 100%)"></div>
<svg style="left:1335.3px;top:351.5px" width="9" height="9"><path d="M.5 1.2h7.6M.5 4h7.6M.5 6.8h7.6" stroke="#474747" stroke-width="1.3"/><path d="M.5 2.3h7.6M.5 5.1h7.6M.5 7.9h7.6" stroke="#fff" stroke-width=".9"/></svg>
<div style="left:1332.2px;top:659.8px;width:14.8px;height:139.2px;border:1px solid #8a8a8a;border-top:none;border-radius:0 0 2px 2px;background:linear-gradient(90deg,#fbfbfb 0,#efefef 30%,#d6d6d6 65%,#c4c4c4 100%)"></div>
<svg style="left:1336px;top:806.6px" width="8" height="5"><path d="M.2 .4 L7 .4 L3.6 4.2 Z" fill="#7c7c7c"/></svg>
<!-- status bar -->
<div id="status"></div>
<div style="left:0;top:734px;width:2px;height:122px;background:#fff"></div>
<div style="left:1357px;top:700.5px;width:7px;height:20px;background:#f0eded"></div>
<div style="left:1357px;top:720.5px;width:7px;height:136px;background:#fff"></div>
<div style="left:1361px;top:0;width:3px;height:701px;background:#fff"></div>
<div style="left:1357px;top:727.5px;width:4.5px;height:1.3px;background:#1a1a1a"></div>
<span class="t" style="left:-1.7px;top:838.8px;letter-spacing:-.15px">Отключен</span>
<div class="ss" style="left:98.2px"></div><div class="ss" style="left:173px"></div><div class="ss" style="left:377.8px"></div><div class="ss" style="left:407px"></div><div class="ss" style="left:508px"></div>
<span class="t" style="left:179px;top:838.8px;letter-spacing:.14px">23.01.2016 9:42:02 (Локальное)</span>
<svg style="left:385.2px;top:836.2px" width="15" height="16.4" viewBox="0 0 15 16.4"><rect x="1.9" y=".9" width="11.6" height="14.4" rx=".4" fill="#eaf0f9" stroke="#4f8f3f" stroke-width="1.3"/><path d="M13.6 1.4 L13.6 15.4 L2 15.4" fill="none" stroke="#3f7a31" stroke-width="1.2"/><path d="M4.2 3.4h7.6M4.2 5.6h7.6M4.2 7.8h7.6M4.2 10h7.6M4.2 12.2h7.6" stroke="#c2cfe6" stroke-width=".9"/><path d="M.7 2.6h2.4M.7 4.8h2.4M.7 7h2.4M.7 9.2h2.4M.7 11.4h2.4M.7 13.6h2.4" stroke="#7f867c" stroke-width=".9"/></svg>
<div class="btab" style="left:539px;width:51.5px"></div>
<div class="btab" style="left:642px;width:48px"></div>
<div class="btab" style="left:589px;width:55px;height:19.6px;background:#fff;border-bottom:none;border-radius:5px 12px 0 0"></div>
<span class="t" style="left:552px;top:838.9px;letter-spacing:.15px">Tab1</span><span class="t" style="left:603.2px;top:839.9px;letter-spacing:.15px">Tab2</span><span class="t" style="left:653.2px;top:838.9px;letter-spacing:.15px">Tab3</span>
<div style="left:689.6px;top:835.5px;width:24px;height:18px;border:1px solid #8a8a8a;border-radius:3px;background:linear-gradient(#f6f6f6,#e9e9e9 50%,#d9d9d9)"></div>
<span class="t" style="left:696.6px;top:837.8px;letter-spacing:0">+</span>
</body></html>
